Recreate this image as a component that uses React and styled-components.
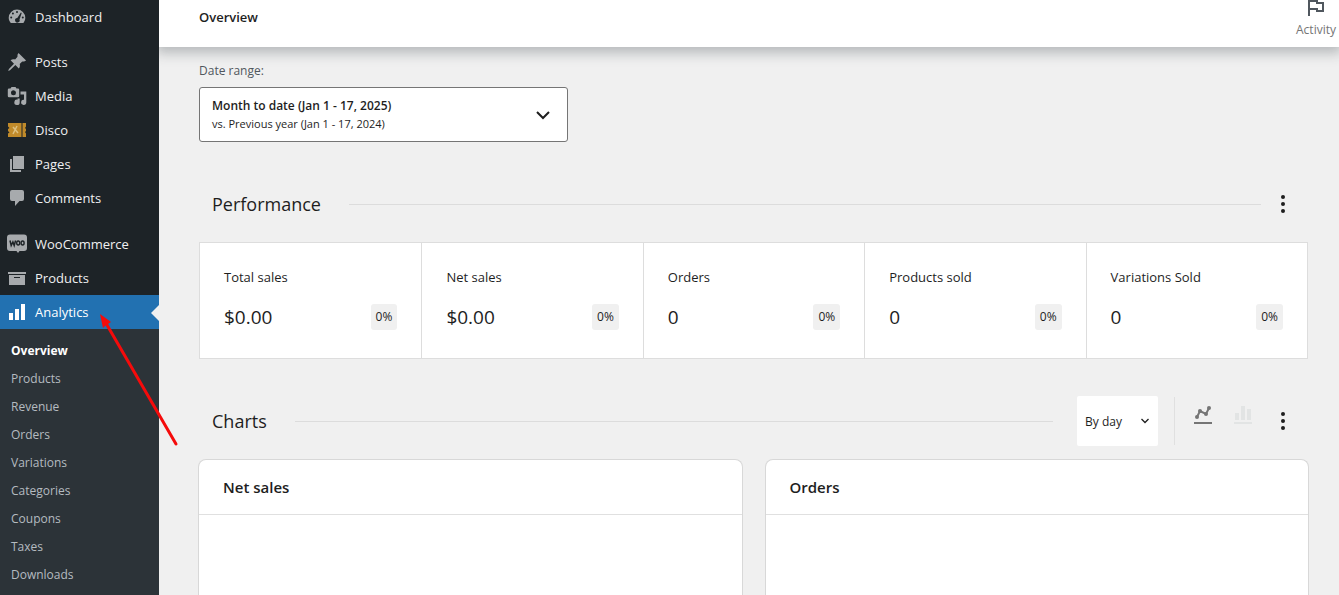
import React, { useState } from 'react';
import styled, { createGlobalStyle, css } from 'styled-components';

const GlobalStyle = createGlobalStyle`
  * { box-sizing: border-box; }
  body {
    margin: 0;
    background: #f0f0f0;
    color: #1e1e1e;
    font-family: "Open Sans", "Noto Sans", sans-serif;
    font-size: 13px;
  }
  button, select { font-family: inherit; color: inherit; }
`;

const Shell = styled.div`
  position: relative;
  display: flex;
  height: 100vh;
  overflow: hidden;
`;

const Sidebar = styled.nav`
  flex: 0 0 159px;
  background: #1d2327;
  z-index: 2;
`;

const MenuGroup = styled.ul`
  list-style: none;
  margin: 0 0 ${({ $gap }) => $gap || 0}px;
  padding: 0;
`;

const MenuLink = styled.a`
  position: relative;
  display: flex;
  align-items: center;
  gap: 8px;
  height: 34px;
  padding-left: 7px;
  color: #f0f0f1;
  font-size: 13px;
  text-decoration: none;

  svg { flex: 0 0 20px; fill: #a7aaad; }

  ${({ $active }) => $active && css`
    background: #2271b1;
    color: #fff;
    svg { fill: #fff; }

    &::after {
      content: '';
      position: absolute;
      right: 0;
      top: 10px;
      border: 8px solid transparent;
      border-left-width: 0;
      border-right-color: #f0f0f0;
    }
  `}
`;

const SubMenu = styled.ul`
  list-style: none;
  margin: 0;
  padding: 8px 0;
  background: #2c3338;
`;

const SubLink = styled.a`
  display: block;
  padding-left: 11px;
  line-height: 28px;
  font-size: 12px;
  font-weight: ${({ $current }) => ($current ? 700 : 400)};
  color: ${({ $current }) => ($current ? '#fff' : '#b5bbc0')};
  text-decoration: none;
`;

const Main = styled.div`
  flex: 1;
  min-width: 0;
  display: flex;
  flex-direction: column;
`;

const Header = styled.header`
  display: flex;
  justify-content: space-between;
  align-items: flex-start;
  height: 47px;
  padding: 5px 3px 0 40px;
  background: #fff;
  box-shadow: 0 3px 12px 3px rgba(60, 67, 74, 0.32);
  z-index: 1;
`;

const PageTitle = styled.h1`
  margin: 0;
  font-size: 13px;
  line-height: 24px;
  font-weight: 600;
`;

const ActivityButton = styled.button`
  display: flex;
  flex-direction: column;
  align-items: center;
  align-self: flex-end;
  padding: 0 0 8px;
  border: 0;
  background: none;
  color: #757575;
  font-size: 12px;
  line-height: 18px;
`;

const Content = styled.main`
  flex: 1;
  display: flex;
  flex-direction: column;
  padding: 14px 31px 0 40px;
`;

const RangeLabel = styled.label`
  margin-bottom: 6px;
  color: #50575e;
  font-size: 12px;
  line-height: 20px;
`;

const RangeButton = styled.button`
  display: flex;
  align-items: center;
  justify-content: space-between;
  width: 369px;
  max-width: 100%;
  height: 55px;
  padding: 1px 12px 0;
  border: 1px solid #757575;
  border-radius: 3px;
  background: #fff;
  text-align: left;
  font-size: 12px;
  line-height: 18px;

  strong { display: block; font-weight: 600; }
  small { display: block; font-size: 11px; }
`;

const SectionHeader = styled.div`
  display: flex;
  align-items: center;
  height: 48px;
  margin: 38px 0 14px;
  padding: 0 13px;
`;

const SectionTitle = styled.h2`
  margin: 0 28px 0 0;
  font-size: 18px;
  font-weight: 400;
`;

const Rule = styled.hr`
  flex: 1;
  margin: 0 ${({ $wide }) => ($wide ? 24 : 10)}px 0 0;
  border: 0;
  border-top: 1px solid #dcdcdc;
`;

const IconButton = styled.button`
  display: flex;
  padding: 0;
  border: 0;
  background: none;
`;

const Summary = styled.ul`
  display: grid;
  grid-template-columns: repeat(5, 1fr);
  margin: 0;
  padding: 0;
  border: 1px solid #ddd;
  background: #fff;
  list-style: none;
`;

const SummaryItem = styled.li`
  padding: 24px 24px 27px;
  & + & { border-left: 1px solid #ddd; }
`;

const SummaryLabel = styled.div`
  font-size: 13px;
  line-height: 20px;
`;

const SummaryData = styled.div`
  display: flex;
  align-items: center;
  justify-content: space-between;
  margin-top: 16px;
`;

const SummaryValue = styled.span`
  font-size: 19px;
  line-height: 28px;
`;

const Delta = styled.span`
  padding: 0 5px;
  border-radius: 3px;
  background: #f0f0f0;
  font-size: 12px;
  line-height: 26px;
`;

const IntervalWrap = styled.div`
  display: grid;
  align-items: center;
  margin-right: 16px;

  select, svg { grid-area: 1 / 1; }
  svg { justify-self: end; margin-right: 7px; pointer-events: none; }
`;

const IntervalSelect = styled.select`
  appearance: none;
  width: 81px;
  height: 50px;
  padding: 0 8px;
  border: 0;
  border-radius: 2px;
  background: #fff;
  font-size: 12px;
`;

const ChartTypes = styled.div`
  display: flex;
  align-self: stretch;
  gap: 20px;
  padding: 7px 18px 0;
  border-left: 1px solid #e0e0e0;
`;

const ChartTypeButton = styled(IconButton)`
  align-self: flex-start;
  color: ${({ $selected }) => ($selected ? '#757575' : '#e2e4e4')};
`;

const ChartGrid = styled.div`
  flex: 1;
  display: grid;
  grid-template-columns: 1fr 1fr;
  gap: 22px;
  margin: 0 -1px;
`;

const ChartCard = styled.section`
  border: 1px solid #d8d8d8;
  border-bottom: 0;
  border-radius: 8px 8px 0 0;
  background: #fff;
`;

const ChartTitle = styled.h3`
  margin: 0;
  padding: 0 24px;
  border-bottom: 1px solid #e0e0e0;
  font-size: 15px;
  font-weight: 600;
  line-height: 54px;
`;

const Pointer = styled.svg`
  position: absolute;
  left: 90px;
  top: 305px;
  z-index: 3;
  pointer-events: none;
`;

const icons = {
  dashboard: (
    <path fillRule="evenodd" d="M3.8 16h12.6c1.1-1.400 1.900-3.200 1.900-5.200A8.300 8.300 0 0 0 10 2.500a8.300 8.300 0 0 0-8.300 8.300c0 2 .8 3.800 2.100 5.200zM10 3.900a1 1 0 1 1 0 2 1 1 0 0 1 0-2zM5.900 5.600a1 1 0 1 1 0 2 1 1 0 0 1 0-2zM13.900 5.500l.8.500-2.200 6.500a2.300 2.300 0 1 1-2.200-1.500zM4.200 9.600a1 1 0 1 1 0 2 1 1 0 0 1 0-2zM15.800 9.600a1 1 0 1 1 0 2 1 1 0 0 1 0-2z" />
  ),
  posts: (
    <path d="M10.400 3l1.100-2 7.600 7.400-2 1.200c-.8-.3-1.500-.3-2.100.1l-2.300 2.300c.5 1.600.3 3.200-.9 4.500l-3.400-3.400L3 18.200 1.200 18.900l.7-1.800 5.100-5.400-3.400-3.400c1.300-1.200 2.900-1.400 4.500-.9l2.200-2.300c.4-.6.400-1.300.1-2.100z" />
  ),
  media: (
    <path fillRule="evenodd" d="M2 2.500h1.500L4.500 1h4l1 1.500H11a1.200 1.200 0 0 1 1.200 1.200V10a1.200 1.200 0 0 1-1.200 1.200H2A1.200 1.200 0 0 1 .8 10V3.700A1.200 1.200 0 0 1 2 2.500zm4.500 1.800a2.500 2.500 0 1 0 0 5 2.500 2.500 0 0 0 0-5zM13.500 5.500h5.800v10.800a2.600 2.600 0 1 1-2.300-2.600V8.500h-3.500zM10.500 12.400h2.200v4A2.700 2.700 0 1 1 10.500 13.700z" />
  ),
  pages: <path d="M6 2h11v13H6zM3 5h2v11h9v2H3z" />,
  comments: <path d="M5 2h10a2 2 0 0 1 2 2v7a2 2 0 0 1-2 2h-2.500L8 18v-5H5a2 2 0 0 1-2-2V4a2 2 0 0 1 2-2z" />,
  products: <path fillRule="evenodd" d="M1 4h18v2H1zM2 7h16v10H2zM7 9v1h6V9z" />,
  analytics: <path d="M2 11h4v7H2zM8 7h4v11H8zM14 2h4v16h-4z" />,
  disco: (
    <g fill="#c08a2a">
      <path d="M1 3h13.500v14H1v-3.500l1.500-1L1 11v-2l1.500-1L1 6.500z" />
      <path d="M15.500 3H19v3.500L18 8l1 1v2l-1 1 1 1.500V17h-3.500z" />
      <path d="M6 7l5 6M10 6l-4 8" stroke="#dcc081" strokeWidth="1.500" />
    </g>
  ),
  woo: (
    <>
      <path d="M3 .5h14a3 3 0 0 1 3 3V14a3 3 0 0 1-3 3h-4.500L11 19l-1.500-2H3a3 3 0 0 1-3-3V3.500a3 3 0 0 1 3-3z" />
      <path d="M3 6.500l1.200 5 1.700-3.500 1.300 3.500L8.600 6.500" fill="none" stroke="#1d2327" strokeWidth="1.500" />
      <ellipse cx="11.200" cy="9" rx="1.500" ry="2" fill="none" stroke="#1d2327" strokeWidth="1.400" />
      <ellipse cx="15.600" cy="9" rx="1.500" ry="2" fill="none" stroke="#1d2327" strokeWidth="1.400" />
    </>
  ),
};

const menuGroups = [
  { gap: 11, items: [['dashboard', 'Dashboard']] },
  {
    gap: 12,
    items: [
      ['posts', 'Posts'],
      ['media', 'Media'],
      ['disco', 'Disco'],
      ['pages', 'Pages'],
      ['comments', 'Comments'],
    ],
  },
  {
    items: [
      ['woo', 'WooCommerce'],
      ['products', 'Products'],
      ['analytics', 'Analytics'],
    ],
  },
];

const subItems = [
  'Overview', 'Products', 'Revenue', 'Orders', 'Variations',
  'Categories', 'Coupons', 'Taxes', 'Downloads',
];

const stats = [
  ['Total sales', '$0.00'],
  ['Net sales', '$0.00'],
  ['Orders', '0'],
  ['Products sold', '0'],
  ['Variations Sold', '0'],
];

const MenuIcon = ({ name }) => (
  <svg width="20" height="20" viewBox="0 0 20 20" aria-hidden="true">{icons[name]}</svg>
);

const MoreButton = ({ label }) => (
  <IconButton type="button" aria-label={label}>
    <svg width="24" height="24" viewBox="0 0 24 24" fill="#1e1e1e">
      <circle cx="12" cy="5" r="2" />
      <circle cx="12" cy="12" r="2" />
      <circle cx="12" cy="19" r="2" />
    </svg>
  </IconButton>
);

const App = () => {
  const [chartType, setChartType] = useState('line');
  const [interval, setInterval] = useState('day');

  return (
    <Shell>
      <GlobalStyle />
      <Sidebar aria-label="Main menu">
        {menuGroups.map((group, i) => (
          <MenuGroup key={i} $gap={group.gap}>
            {group.items.map(([icon, label]) => (
              <li key={icon}>
                <MenuLink href="#" $active={icon === 'analytics'}>
                  <MenuIcon name={icon} />
                  {label}
                </MenuLink>
              </li>
            ))}
          </MenuGroup>
        ))}
        <SubMenu>
          {subItems.map((label) => (
            <li key={label}>
              <SubLink href="#" $current={label === 'Overview'}>{label}</SubLink>
            </li>
          ))}
        </SubMenu>
      </Sidebar>

      <Main>
        <Header>
          <PageTitle>Overview</PageTitle>
          <ActivityButton type="button">
            <svg width="24" height="24" viewBox="0 0 24 24" fill="none" stroke="#50575e" strokeWidth="2">
              <path d="M5 19V4h8v2h6v8h-6v-2H5" />
            </svg>
            Activity
          </ActivityButton>
        </Header>

        <Content>
          <RangeLabel htmlFor="range">Date range:</RangeLabel>
          <RangeButton id="range" type="button">
            <span>
              <strong>Month to date (Jan 1 - 17, 2025)</strong>
              <small>vs. Previous year (Jan 1 - 17, 2024)</small>
            </span>
            <svg width="24" height="24" viewBox="0 0 24 24" fill="none" stroke="#1e1e1e" strokeWidth="2">
              <path d="M6 9l6 6 6-6" />
            </svg>
          </RangeButton>

          <SectionHeader>
            <SectionTitle>Performance</SectionTitle>
            <Rule />
            <MoreButton label="Choose which analytics to display" />
          </SectionHeader>
          <Summary>
            {stats.map(([label, value]) => (
              <SummaryItem key={label}>
                <SummaryLabel>{label}</SummaryLabel>
                <SummaryData>
                  <SummaryValue>{value}</SummaryValue>
                  <Delta>0%</Delta>
                </SummaryData>
              </SummaryItem>
            ))}
          </Summary>

          <SectionHeader>
            <SectionTitle>Charts</SectionTitle>
            <Rule $wide />
            <IntervalWrap>
              <IntervalSelect
                aria-label="Interval"
                value={interval}
                onChange={(e) => setInterval(e.target.value)}
              >
                <option value="day">By day</option>
                <option value="week">By week</option>
              </IntervalSelect>
              <svg width="12" height="12" viewBox="0 0 12 12" fill="none" stroke="#1e1e1e" strokeWidth="1.300">
                <path d="M2.500 4L6 7.500 9.500 4" />
              </svg>
            </IntervalWrap>
            <ChartTypes>
              <ChartTypeButton
                type="button"
                aria-label="Line chart"
                $selected={chartType === 'line'}
                onClick={() => setChartType('line')}
              >
                <svg width="20" height="20" viewBox="0 0 20 20" fill="currentColor">
                  <path d="M4 13l3-6 6 3 3-6" fill="none" stroke="currentColor" strokeWidth="2" />
                  <circle cx="4" cy="13" r="2" />
                  <circle cx="7" cy="7" r="2" />
                  <circle cx="13" cy="10" r="2" />
                  <circle cx="16" cy="4" r="2" />
                  <path d="M1 18h18v2H1z" />
                </svg>
              </ChartTypeButton>
              <ChartTypeButton
                type="button"
                aria-label="Bar chart"
                $selected={chartType === 'bar'}
                onClick={() => setChartType('bar')}
              >
                <svg width="20" height="20" viewBox="0 0 20 20" fill="currentColor">
                  <path d="M2 9h4v7H2zM8 2h4v14H8zM14 5h4v11h-4zM1 18h18v2H1z" />
                </svg>
              </ChartTypeButton>
            </ChartTypes>
            <MoreButton label="Choose which charts to display" />
          </SectionHeader>
          <ChartGrid>
            <ChartCard><ChartTitle>Net sales</ChartTitle></ChartCard>
            <ChartCard><ChartTitle>Orders</ChartTitle></ChartCard>
          </ChartGrid>
        </Content>
      </Main>

      <Pointer width="90" height="145" viewBox="0 0 90 145" aria-hidden="true">
        <path d="M17 20l69 119" stroke="#f50b0b" strokeWidth="3" strokeLinecap="round" />
        <path d="M10 9l11 8-3 2-3 2-2 2z" fill="#f50b0b" />
      </Pointer>
    </Shell>
  );
};

export default App;
